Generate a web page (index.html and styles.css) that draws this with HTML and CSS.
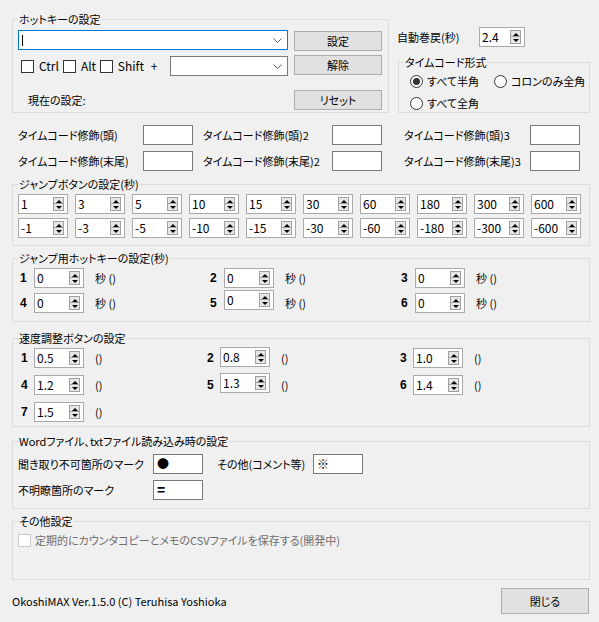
FILE: index.html
```html
<!DOCTYPE html>
<html lang="ja">
<head>
    <meta charset="UTF-8">
    <title>設定</title>
    <link rel="stylesheet" href="styles.css">
</head>
<body>
<div class="dialog">
    <div class="top">
        <fieldset class="group hotkey">
            <legend>ホットキーの設定</legend>
            <div class="hk-row">
                <div class="combo wide focus">
                    <span class="caret"></span>
                    <svg class="chev" width="9" height="5" viewBox="0 0 9 5"><polyline points="0.5,0.5 4.5,4.5 8.5,0.5" fill="none" stroke="#606060"/></svg>
                </div>
                <button class="btn">設定</button>
            </div>
            <div class="hk-row second">
                <div class="mods">
                    <span class="check first"></span><span class="mod ctrl">Ctrl</span>
                    <span class="check"></span><span class="mod alt">Alt</span>
                    <span class="check"></span><span class="mod shift">Shift</span>
                    <span class="plus">+</span>
                    <div class="combo key">
                        <span></span>
                        <svg class="chev" width="9" height="5" viewBox="0 0 9 5"><polyline points="0.5,0.5 4.5,4.5 8.5,0.5" fill="none" stroke="#606060"/></svg>
                    </div>
                </div>
                <button class="btn">解除</button>
            </div>
            <div class="hk-row third">
                <span class="current">現在の設定:</span>
                <button class="btn">リセット</button>
            </div>
        </fieldset>

        <div class="side">
            <div class="rewind">
                <span class="rewind-label">自動巻戻(秒)</span>
                <span class="spin short"><span class="val">2.4</span><span class="ud"></span></span>
            </div>
            <fieldset class="group tcformat">
                <legend>タイムコード形式</legend>
                <div class="radios">
                    <span class="opt"><span class="radio on"></span>すべて半角</span>
                    <span class="opt"><span class="radio"></span>コロンのみ全角</span>
                    <span class="opt"><span class="radio"></span>すべて全角</span>
                </div>
            </fieldset>
        </div>
    </div>

    <div class="tc">
        <span>タイムコード修飾(頭)</span><span class="tbox"></span>
        <span>タイムコード修飾(頭)2</span><span class="tbox"></span>
        <span>タイムコード修飾(頭)3</span><span class="tbox"></span>
        <span>タイムコード修飾(末尾)</span><span class="tbox"></span>
        <span>タイムコード修飾(末尾)2</span><span class="tbox"></span>
        <span>タイムコード修飾(末尾)3</span><span class="tbox"></span>
    </div>

    <fieldset class="group jump">
        <legend>ジャンプボタンの設定(秒)</legend>
        <div class="jump-grid">
            <span class="spin"><span class="val">1</span><span class="ud"></span></span>
            <span class="spin"><span class="val">3</span><span class="ud"></span></span>
            <span class="spin"><span class="val">5</span><span class="ud"></span></span>
            <span class="spin"><span class="val">10</span><span class="ud"></span></span>
            <span class="spin"><span class="val">15</span><span class="ud"></span></span>
            <span class="spin"><span class="val">30</span><span class="ud"></span></span>
            <span class="spin"><span class="val">60</span><span class="ud"></span></span>
            <span class="spin"><span class="val">180</span><span class="ud"></span></span>
            <span class="spin"><span class="val">300</span><span class="ud"></span></span>
            <span class="spin"><span class="val">600</span><span class="ud"></span></span>
            <span class="spin"><span class="val">-1</span><span class="ud"></span></span>
            <span class="spin"><span class="val">-3</span><span class="ud"></span></span>
            <span class="spin"><span class="val">-5</span><span class="ud"></span></span>
            <span class="spin"><span class="val">-10</span><span class="ud"></span></span>
            <span class="spin"><span class="val">-15</span><span class="ud"></span></span>
            <span class="spin"><span class="val">-30</span><span class="ud"></span></span>
            <span class="spin"><span class="val">-60</span><span class="ud"></span></span>
            <span class="spin"><span class="val">-180</span><span class="ud"></span></span>
            <span class="spin"><span class="val">-300</span><span class="ud"></span></span>
            <span class="spin"><span class="val">-600</span><span class="ud"></span></span>
        </div>
    </fieldset>

    <fieldset class="group jhk">
        <legend>ジャンプ用ホットキーの設定(秒)</legend>
        <div class="cells hk-cells">
            <div class="cell"><b class="num">1</b><span class="spin"><span class="val">0</span><span class="ud"></span></span><span class="unit">秒 ()</span></div>
            <div class="cell"><b class="num">2</b><span class="spin"><span class="val">0</span><span class="ud"></span></span><span class="unit">秒 ()</span></div>
            <div class="cell"><b class="num">3</b><span class="spin"><span class="val">0</span><span class="ud"></span></span><span class="unit">秒 ()</span></div>
            <div class="cell"><b class="num">4</b><span class="spin"><span class="val">0</span><span class="ud"></span></span><span class="unit">秒 ()</span></div>
            <div class="cell"><b class="num">5</b><span class="spin up3"><span class="val">0</span><span class="ud"></span></span><span class="unit">秒 ()</span></div>
            <div class="cell"><b class="num">6</b><span class="spin"><span class="val">0</span><span class="ud"></span></span><span class="unit">秒 ()</span></div>
        </div>
    </fieldset>

    <fieldset class="group speed">
        <legend>速度調整ボタンの設定</legend>
        <div class="cells sp-cells">
            <div class="cell"><b class="num">1</b><span class="spin"><span class="val">0.5</span><span class="ud"></span></span><span class="unit">()</span></div>
            <div class="cell"><b class="num">2</b><span class="spin up1"><span class="val">0.8</span><span class="ud"></span></span><span class="unit">()</span></div>
            <div class="cell"><b class="num">3</b><span class="spin"><span class="val">1.0</span><span class="ud"></span></span><span class="unit">()</span></div>
            <div class="cell"><b class="num">4</b><span class="spin"><span class="val">1.2</span><span class="ud"></span></span><span class="unit">()</span></div>
            <div class="cell"><b class="num">5</b><span class="spin up2"><span class="val">1.3</span><span class="ud"></span></span><span class="unit">()</span></div>
            <div class="cell"><b class="num">6</b><span class="spin"><span class="val">1.4</span><span class="ud"></span></span><span class="unit">()</span></div>
            <div class="cell"><b class="num">7</b><span class="spin"><span class="val">1.5</span><span class="ud"></span></span><span class="unit">()</span></div>
        </div>
    </fieldset>

    <fieldset class="group word">
        <legend>Wordファイル、txtファイル読み込み時の設定</legend>
        <div class="word-grid">
            <span>聞き取り不可箇所のマーク</span><span class="tbox mark">●</span>
            <span class="other-label">その他(コメント等)</span><span class="tbox mark">※</span>
            <span>不明瞭箇所のマーク</span><span class="tbox mark eq">=</span>
        </div>
    </fieldset>

    <fieldset class="group other">
        <legend>その他設定</legend>
        <div class="disabled-row"><span class="check off"></span>定期的にカウンタコピーとメモのCSVファイルを保存する(開発中)</div>
    </fieldset>

    <div class="footer">
        <span>OkoshiMAX Ver.1.5.0 (C) Teruhisa Yoshioka</span>
        <button class="btn close">閉じる</button>
    </div>
</div>
</body>
</html>
```

FILE: styles.css
```css
body {
    margin: 0;
    background: #f0f0f0;
    font-family: "Noto Sans CJK JP", "Noto Sans", sans-serif;
    font-size: 11px;
    color: #000;
    font-feature-settings: "palt";
    white-space: nowrap;
}

.dialog {
    width: 578px;
    padding: 12px 0 0 12px;
}

/* group boxes */
.group {
    margin: 0;
    padding: 0 0 0 5px;
    border: 1px solid #dcdcdc;
    min-width: 0;
    box-sizing: border-box;
}

.group legend {
    padding: 0 1px;
    height: 14px;
    line-height: 14px;
}

/* buttons and inputs */
.btn {
    width: 88px;
    height: 20px;
    margin: 0;
    padding: 0;
    border: 1px solid #adadad;
    background: #e1e1e1;
    font: inherit;
    line-height: 18px;
    color: #000;
}

.combo {
    display: flex;
    align-items: center;
    justify-content: space-between;
    height: 20px;
    box-sizing: border-box;
    border: 1px solid #7a7a7a;
    background: #fff;
    padding: 0 5px 0 3px;
}

.combo.focus {
    border-color: #0078d7;
}

.combo.wide {
    width: 270px;
}

.combo.key {
    width: 119px;
}

.caret {
    width: 1px;
    height: 11px;
    background: #000;
}

.tbox {
    display: block;
    width: 50px;
    height: 20px;
    box-sizing: border-box;
    border: 1px solid #7a7a7a;
    background: #fff;
}

.check {
    flex: none;
    width: 13px;
    height: 13px;
    box-sizing: border-box;
    border: 1px solid #333;
    background: #fff;
    margin-top: 2px;
}

.check.off {
    border-color: #cccccc;
    margin: 0 4px 0 0;
}

/* spinners */
.spin {
    display: flex;
    flex: none;
    align-items: center;
    justify-content: space-between;
    width: 50px;
    height: 20px;
    box-sizing: border-box;
    border: 1px solid #a9a9a9;
    background: #fff;
    padding: 0 3px 0 2px;
    line-height: 18px;
    font-size: 12px;
}

.spin.short {
    width: 46px;
}

.spin.up1 { margin: -1px 0 1px; }
.spin.up2 { margin: -2px 0 2px; }
.spin.up3 { margin: -3px 0 3px; }

.ud {
    width: 11px;
    height: 14px;
    box-sizing: border-box;
    border: 1px solid #a0a0a0;
    background: linear-gradient(#e6e6e6 0 5px, #a0a0a0 5px 6px, #e6e6e6 6px);
    display: flex;
    flex-direction: column;
    align-items: center;
    justify-content: space-around;
}

.ud::before {
    content: "";
    border-left: 3px solid transparent;
    border-right: 3px solid transparent;
    border-bottom: 3px solid #000;
}

.ud::after {
    content: "";
    border-left: 3px solid transparent;
    border-right: 3px solid transparent;
    border-top: 3px solid #000;
}

/* top area */
.top {
    display: flex;
    align-items: flex-start;
}

.hotkey {
    width: 377px;
    padding-top: 4px;
    padding-bottom: 2px;
}

.hk-row {
    display: flex;
    align-items: flex-start;
    gap: 6px;
}

.hk-row .btn {
    margin-top: 1px;
}

.hk-row.second {
    margin-top: 4px;
}

.hk-row.second .btn,
.hk-row.third .btn {
    margin-top: 0;
}

.hk-row.third {
    margin-top: 14px;
}

.mods {
    display: flex;
    align-items: center;
    width: 270px;
    height: 21px;
}

.mods .combo {
    margin-top: 1px;
}

.check.first {
    margin-left: 3px;
}

.mod {
    margin-left: 5px;
    font-size: 12px;
}

.ctrl { width: 24px; }
.alt { width: 19px; }
.shift { width: 33px; }

.plus {
    width: 19px;
    font-size: 12px;
}

.current {
    width: 260px;
    padding-left: 10px;
    line-height: 20px;
}

.side {
    margin-left: 8px;
    width: 193px;
}

.rewind {
    display: flex;
    align-items: center;
    margin-top: 15px;
}

.rewind-label {
    width: 82px;
}

.tcformat {
    width: 192px;
    margin: 8px 0 0 1px;
    padding-top: 5px;
    padding-bottom: 2px;
}

.radios {
    display: grid;
    grid-template-columns: 84px auto;
    row-gap: 8px;
    margin-left: 6px;
    line-height: 14px;
}

.opt {
    display: flex;
    align-items: center;
}

.radio {
    display: flex;
    align-items: center;
    justify-content: center;
    width: 13px;
    height: 13px;
    box-sizing: border-box;
    border: 1px solid #333;
    border-radius: 50%;
    background: #fff;
    margin-right: 4px;
}

.radio.on::after {
    content: "";
    width: 7px;
    height: 7px;
    border-radius: 50%;
    background: #333;
}

/* timecode decoration */
.tc {
    display: grid;
    grid-template-columns: 125px 60px 129px 72px 126px 50px;
    align-items: center;
    row-gap: 6px;
    margin-top: 12px;
    padding-left: 6px;
}

/* jump buttons */
.jump {
    margin-top: 6px;
    padding-top: 3px;
    padding-bottom: 7px;
}

.jump-grid {
    display: grid;
    grid-template-columns: repeat(10, 50px);
    gap: 4px 7px;
}

/* hotkey and speed cells */
.jhk {
    margin-top: 5px;
    padding-top: 3px;
    padding-bottom: 8px;
}

.speed {
    margin-top: 9px;
    padding-top: 3px;
    padding-bottom: 4px;
}

.cells {
    display: grid;
    align-items: center;
}

.hk-cells {
    grid-template-columns: 190px 191px 1fr;
    row-gap: 5px;
    padding-left: 2px;
}

.sp-cells {
    grid-template-columns: 186px 193px 1fr;
    row-gap: 7px;
    padding-left: 3px;
}

.cell {
    display: flex;
    align-items: center;
    height: 20px;
}

.num {
    width: 14px;
    font-family: "Liberation Sans", sans-serif;
    font-size: 12px;
    font-weight: bold;
}

.sp-cells .num {
    width: 13px;
}

.unit {
    margin-left: 11px;
}

/* word import */
.word {
    margin-top: 7px;
    padding-top: 6px;
    padding-bottom: 8px;
}

.word-grid {
    display: grid;
    grid-template-columns: 135px 64px 96px 50px;
    align-items: center;
    row-gap: 6px;
}

.mark {
    padding-left: 3px;
    line-height: 18px;
    font-size: 12px;
}

.mark.eq {
    font-family: "Liberation Sans", sans-serif;
    font-weight: bold;
    font-size: 14px;
}

/* other */
.other {
    margin-top: 5px;
    padding-top: 5px;
    padding-bottom: 32px;
}

.disabled-row {
    display: flex;
    align-items: center;
    height: 14px;
    color: #6d6d6d;
}

.footer {
    display: flex;
    justify-content: space-between;
    align-items: center;
    margin-top: 8px;
}

.btn.close {
    height: 26px;
    margin-right: 1px;
    line-height: 24px;
}
```
